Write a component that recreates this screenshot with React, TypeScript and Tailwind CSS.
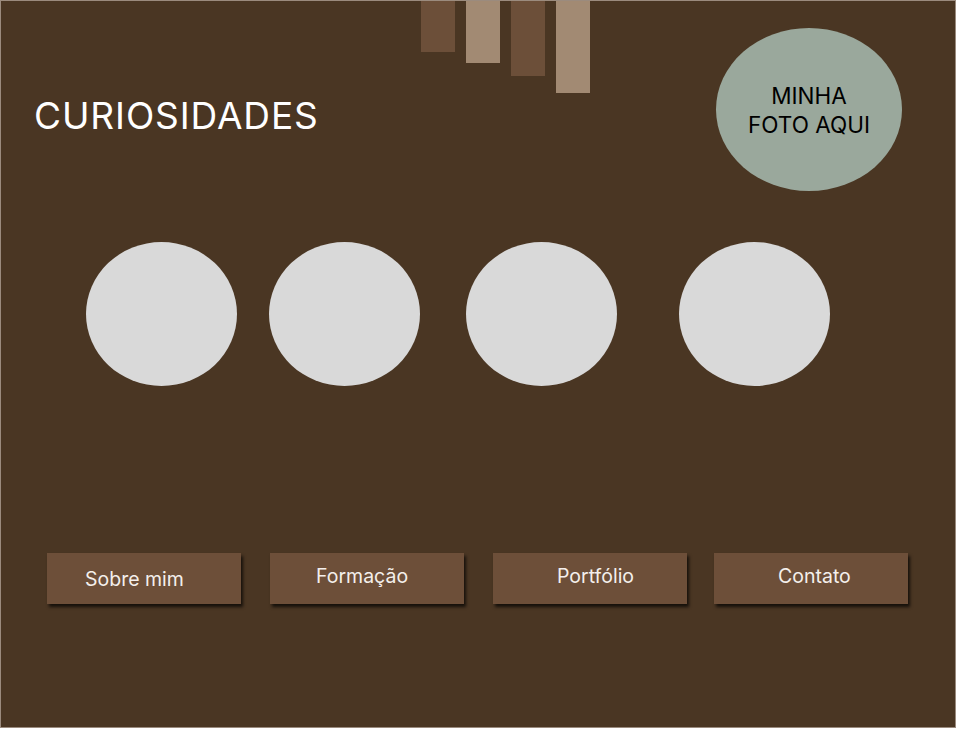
import React from 'react';

const bars = [
  { h: 'h-[51px]', c: 'bg-[#6c4f39]' },
  { h: 'h-[62px]', c: 'bg-[#a28a73]' },
  { h: 'h-[75px]', c: 'bg-[#6c4f39]' },
  { h: 'h-[92px]', c: 'bg-[#a28a73]' },
];

const circles = ['ml-0', 'ml-[32px]', 'ml-[46px]', 'ml-[62px]'];

const buttons = [
  { label: 'Sobre mim', cls: 'ml-0 pl-[38px] pt-[14px]' },
  { label: 'Formação', cls: 'ml-[29px] pl-[46px] pt-[11px]' },
  { label: 'Portfólio', cls: 'ml-[29px] pl-[64px] pt-[11px]' },
  { label: 'Contato', cls: 'ml-[27px] pl-[64px] pt-[11px]' },
];

export default function App() {
  return (
    <div className="w-[957px] h-[730px] bg-white" style={{ fontFamily: 'Inter, "Noto Sans", sans-serif' }}>
      <div className="w-[956px] h-[728px] border border-[#9b8b7e] bg-[#4a3623] overflow-hidden">
        {/* Header */}
        <div className="flex items-start h-[241px] pl-[33px]">
          <h1 className="w-[387px] pt-[94px] text-[37px] leading-[42px] tracking-[0.9px] text-white font-normal">
            CURIOSIDADES
          </h1>

          <div className="flex items-start gap-[11px]">
            {bars.map((b, i) => (
              <div key={i} className={`w-[34px] ${b.h} ${b.c}`} />
            ))}
          </div>

          <div className="ml-[126px] mt-[27px] w-[186px] h-[163px] shrink-0 rounded-[50%] bg-[#9aa89c] flex items-center justify-center">
            <p className="text-center text-[22.5px] leading-[29px] text-black">
              MINHA
              <br />
              FOTO AQUI
            </p>
          </div>
        </div>

        {/* Curiosidades circles */}
        <div className="flex pl-[85px]">
          {circles.map((m, i) => (
            <div key={i} className={`${m} w-[151px] h-[144px] shrink-0 rounded-[50%] bg-[#d9d9d9]`} />
          ))}
        </div>

        {/* Nav buttons */}
        <div className="flex pl-[46px] mt-[167px]">
          {buttons.map((b) => (
            <div
              key={b.label}
              className={`${b.cls} w-[194px] h-[51px] shrink-0 bg-[#6d4f39] text-[19.5px] leading-[24px] text-[#f4efec] shadow-[2px_3px_3px_rgba(0,0,0,0.7)]`}
            >
              {b.label}
            </div>
          ))}
        </div>
      </div>
    </div>
  );
}
